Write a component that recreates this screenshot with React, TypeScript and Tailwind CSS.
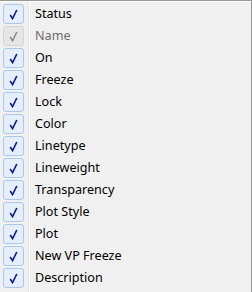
const items = [
  { label: "Status", enabled: true },
  { label: "Name", enabled: false },
  { label: "On", enabled: true },
  { label: "Freeze", enabled: true },
  { label: "Lock", enabled: true },
  { label: "Color", enabled: true },
  { label: "Linetype", enabled: true },
  { label: "Lineweight", enabled: true },
  { label: "Transparency", enabled: true },
  { label: "Plot Style", enabled: true },
  { label: "Plot", enabled: true },
  { label: "New VP Freeze", enabled: true },
  { label: "Description", enabled: true },
];

function Check({ enabled }: { enabled: boolean }) {
  return (
    <div
      className={
        enabled
          ? "flex h-[20px] w-[21px] items-center justify-center rounded-[3px] border border-[#a8c8f0] bg-[#e5eefb]"
          : "flex h-[20px] w-[21px] items-center justify-center rounded-[3px] border border-[#d4d4d4] bg-[#e6e6e6]"
      }
    >
      <svg width="9" height="11" viewBox="0 0 9 11">
        <path
          d="M1.2 6 L3.6 9.6 L7.8 1"
          fill="none"
          stroke={enabled ? "#0e1690" : "#8a8a8a"}
          strokeWidth="1.6"
        />
      </svg>
    </div>
  );
}

export default function App() {
  return (
    <div className="h-[292px] w-[252px] overflow-hidden border-t border-r border-[#979797] bg-[#f0f0f0] font-['Noto_Sans',sans-serif] text-[12.6px]">
      <div className="flex h-full border-t border-[#fbfbfb]">
        <div className="flex w-[28px] flex-col pl-[3px] pt-[1px]">
          {items.map((it) => (
            <div key={it.label} className="flex h-[22px] items-center">
              <Check enabled={it.enabled} />
            </div>
          ))}
        </div>
        <div className="w-px bg-[#e2e3e3]" />
        <div className="w-px bg-white" />
        <div className="flex flex-col pl-[5px] pt-[1px]">
          {items.map((it) => (
            <div
              key={it.label}
              className={
                it.enabled
                  ? "flex h-[22px] items-center text-black"
                  : "flex h-[22px] items-center text-[#6d6d6d]"
              }
            >
              {it.label}
            </div>
          ))}
        </div>
      </div>
    </div>
  );
}
